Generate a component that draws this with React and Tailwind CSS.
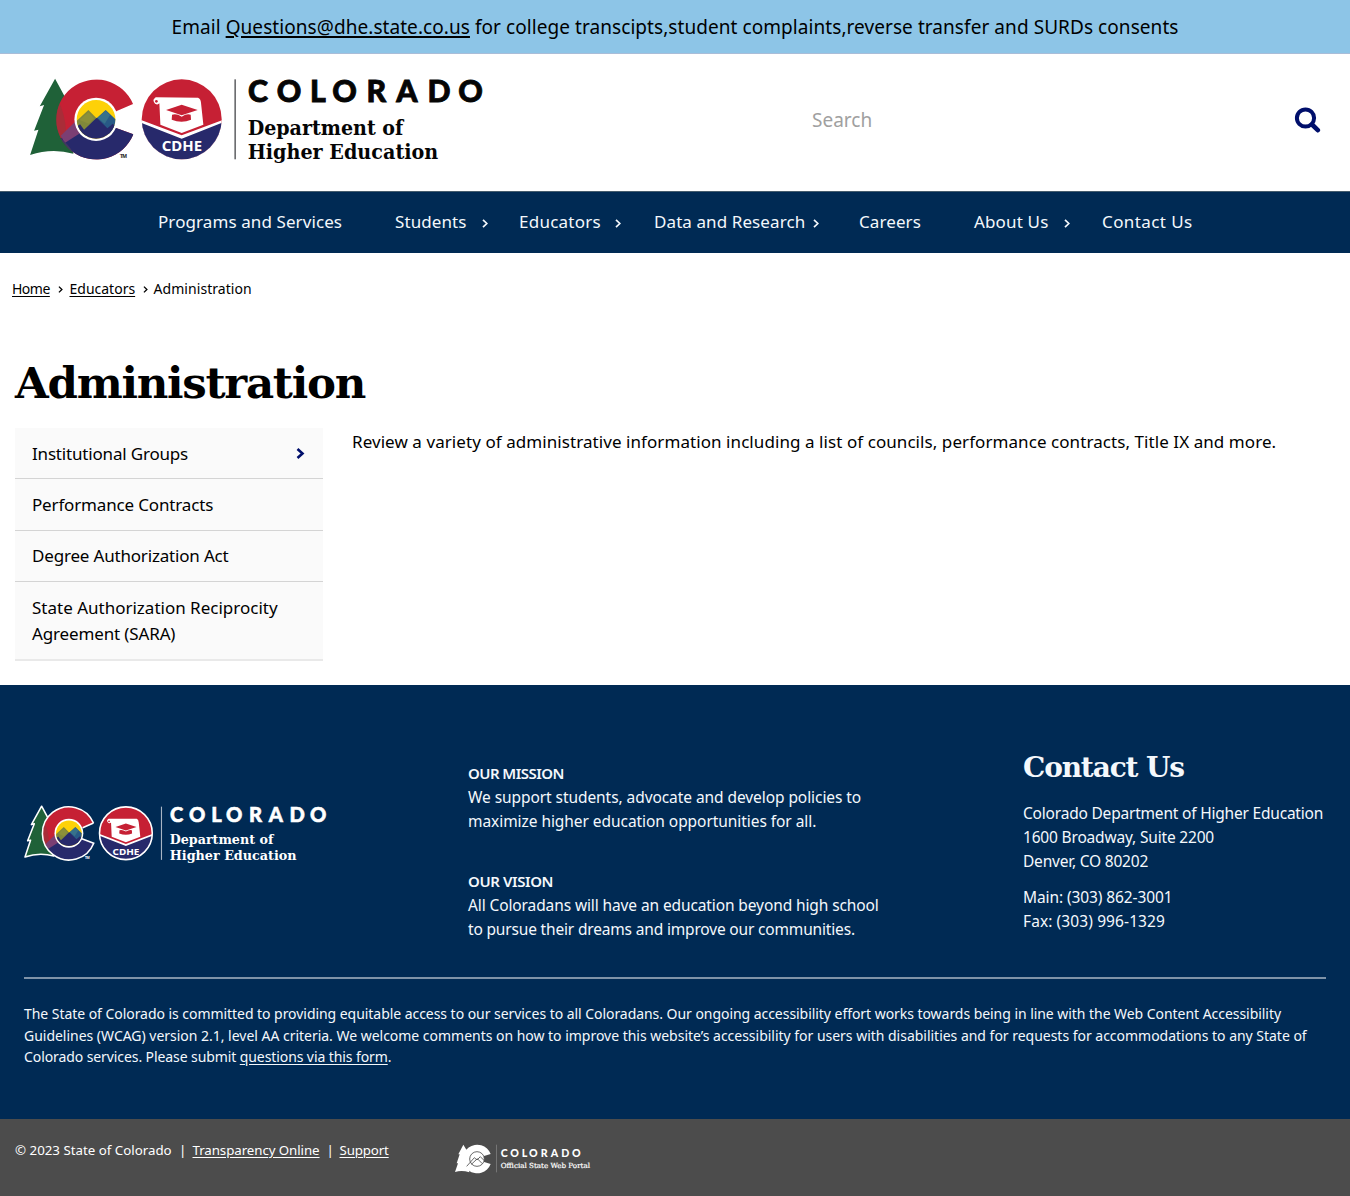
import { useId } from "react";

const slab = "font-['DejaVu_Serif',serif] font-bold";

const letters = [
  ["C", 684], ["O", 770], ["L", 870], ["O", 937],
  ["R", 1040], ["A", 1129], ["D", 1223], ["O", 1315],
];

function Emblem({ outlined }) {
  const id = useId();
  const line = outlined ? "#ffffff" : "none";
  return (
    <g>
      <path
        d="M105 43 L140 108 L160 268 Q95 250 30 272 L55 196 L42 199 L72 122 L59 126 Z"
        fill="#1f6138" stroke={line} strokeWidth="7" strokeLinejoin="round"
      />
      <clipPath id={id + "c"}>
        <path d="M339 119 A120 120 0 1 0 340 210 L286 190 L260 165 L290 140 Z" />
      </clipPath>
      <g clipPath={`url(#${id}c)`}>
        <rect x="100" y="40" width="250" height="250" fill="#c62034" />
        <path d="M100 246 L175 170 L290 190 L350 190 L350 300 L100 300 Z" fill="#27296b" />
        <path d="M100 130 L113 105 Q136 150 138 205 L112 234 Z" fill="#8c3a3c" opacity=".5" />
        <path d="M122 214 L176 162 L182 205 L134 236 Z" fill="#7b3f73" />
        <path d="M118 218 L134 232 Q156 254 160 270 L110 270 Z" fill="#413a61" />
      </g>
      {outlined && (
        <path d="M339 119 A120 120 0 1 0 340 210 L286 190 M290 140 L339 119" fill="none" stroke="#fff" strokeWidth="7" />
      )}
      <circle cx="228" cy="165" r="65" fill="#fff" />
      <clipPath id={id + "d"}><circle cx="228" cy="165" r="58" /></clipPath>
      <g clipPath={`url(#${id}d)`}>
        <rect x="168" y="105" width="120" height="120" fill="#fdd108" />
        <path d="M165 174 L205 137 L262 195 L165 225 Z" fill="#80883a" />
        <path d="M178 167 L205 144 L222 162 L206 178 Z" fill="#96973a" opacity=".5" />
        <path d="M215 175 L257 137 L300 178 L290 225 Z" fill="#285a86" />
        <path d="M232 160 L257 139 L270 152 L254 178 Z" fill="#37718b" />
        <path d="M165 190 L180 180 L192 196 L230 160 L262 192 L278 178 L295 194 L290 230 L165 230 Z" fill="#27296b" />
      </g>
      <text x="299" y="281" fontSize="17" fontWeight="700" fontFamily="Liberation Sans" fill={outlined ? "#fff" : "#222"} textLength="22">TM</text>

      <clipPath id={id + "e"}><circle cx="485" cy="165" r="120" /></clipPath>
      <g clipPath={`url(#${id}e)`}>
        <rect x="360" y="40" width="250" height="250" fill="#c62034" />
        <path d="M360 166 L485 213 L610 166 V290 H360 Z" fill="#fff" />
        <path d="M360 174 L485 223 L610 174 V290 H360 Z" fill="#27296b" />
      </g>
      <path d="M407 99 L534 100 Q542 103 543 116 L550 181 L485 206 L421 181 L418 117 Q413 123 405 118 Q396 108 404 102 Z" fill="#fff" />
      <circle cx="409" cy="111" r="4" fill="#c62034" />
      <path d="M438 137 L485 121 L533 137 L485 153 Z" fill="#c62034" />
      <path d="M456 151 Q470 147 485 157 Q500 147 512 151 L513 166 Q485 178 455 166 Z" fill="#c62034" />
      {outlined && <circle cx="485" cy="165" r="119" fill="none" stroke="#fff" strokeWidth="7" />}
      <text x="425" y="261" fontSize="40" fontWeight="700" fontFamily="Noto Sans" fill="#fff" textLength="121" lengthAdjust="spacingAndGlyphs">CDHE</text>
    </g>
  );
}

function DepartmentLogo({ outlined = false, className }) {
  const ink = outlined ? "#ffffff" : "#050505";
  return (
    <svg viewBox="30 38 1362 262" className={className} role="img" aria-label="Colorado Department of Higher Education">
      <Emblem outlined={outlined} />
      <rect x="643" y="45" width="5" height="240" fill={outlined ? "#a9b5c4" : "#6d6e71"} />
      <g fill={ink} stroke={ink} strokeWidth="2.5" fontSize="91" fontFamily="Lato" fontWeight="900">
        {letters.map(([l, x], i) => <text key={i} x={x} y="112">{l}</text>)}
      </g>
      <g fill={ink} fontSize="59" fontWeight="700" fontFamily="'DejaVu Serif',serif">
        <text x="683" y="213" textLength="467" lengthAdjust="spacingAndGlyphs">Department of</text>
        <text x="683" y="284" textLength="572" lengthAdjust="spacingAndGlyphs">Higher Education</text>
      </g>
    </svg>
  );
}

function PortalLogo() {
  const caps = [["C", 182], ["O", 211], ["L", 245], ["O", 267], ["R", 302], ["A", 332], ["D", 364], ["O", 396]];
  return (
    <svg viewBox="42 40 414 92" className="h-[30.7px] w-[138px] overflow-visible" role="img" aria-label="Colorado Official State Web Portal">
      <path d="M70 45 L83 66 L88 128 Q65 120 45 127 L54 101 L50 101 L59 74 L55 74 Z" fill="#fff" />
      <path d="M152 73 A43 43 0 1 0 152 103 L130 96 L122 86 L132 79 Z" fill="#fff" />
      <circle cx="111" cy="88" r="22" fill="#fff" stroke="#4c4c4c" strokeWidth="2.5" />
      <path d="M80 110 L103 84 L111 91 L121 81 L133 93 M94 104 L112 87 L127 102" fill="none" stroke="#4c4c4c" strokeWidth="2.5" />
      <rect x="168" y="45" width="2" height="83" fill="#8b8b8b" />
      <g fill="#fff" fontSize="32" fontFamily="Lato" fontWeight="900">
        {caps.map(([l, x], i) => <text key={i} x={x} y="81">{l}</text>)}
      </g>
      <text x="182" y="114" fill="#fff" stroke="#fff" strokeWidth=".6" fontSize="21" fontFamily="'DejaVu Serif',serif" textLength="268" lengthAdjust="spacingAndGlyphs">Official State Web Portal</text>
    </svg>
  );
}

function Chevron({ className }) {
  return (
    <svg viewBox="0 0 6 9" className={className} fill="none" stroke="currentColor" strokeWidth="1.7">
      <path d="M1 .8 L4.8 4.5 L1 8.2" />
    </svg>
  );
}

const nav = [
  { label: "Programs and Services", outer: "w-[237px]" },
  { label: "Students", outer: "w-[124px]", inner: "w-[93px]" },
  { label: "Educators", outer: "w-[135px] tracking-[0.25px]", inner: "w-[102px]" },
  { label: "Data and Research", outer: "w-[205px]", inner: "w-[165px]" },
  { label: "Careers", outer: "w-[115px]" },
  { label: "About Us", outer: "w-[128px] tracking-[0.15px]", inner: "w-[96px]" },
  { label: "Contact Us", outer: "w-[110px] tracking-[0.4px]" },
];

const sections = [
  ["Institutional Groups", "tracking-[-0.18px]"],
  ["Performance Contracts", "tracking-[-0.16px]"],
  ["Degree Authorization Act", "tracking-[-0.18px]"],
];

export default function App() {
  return (
    <div className="min-h-[1196px] w-full overflow-hidden bg-white font-['Noto_Sans',sans-serif] text-black">
      <div className="flex h-[54px] items-center justify-center border-b border-[#a9bdd8] bg-[#8dc5e7] pt-[2px] text-[19px] tracking-[0.066px] whitespace-pre">
        Email <a className="underline decoration-2 underline-offset-2">Questions@dhe.state.co.us</a> for college transcipts,student complaints,reverse transfer and SURDs consents
      </div>

      <header className="flex h-[137px] items-start pl-[30px]">
        <DepartmentLogo className="mt-[22.7px] h-[87.3px] w-[454px] overflow-visible" />
        <div className="ml-[327px] flex h-[132px] w-[510px] items-center justify-between">
          <span className="pl-px text-[19px] text-[#a0a0a0]">Search</span>
          <svg viewBox="0 0 27 26" className="h-[26px] w-[27px]" fill="none" stroke="#000f6b">
            <circle cx="11.5" cy="11" r="8.6" strokeWidth="4" />
            <path d="M18 17.5 L23.8 23.2" strokeWidth="4.6" strokeLinecap="round" />
          </svg>
        </div>
      </header>

      <nav className="flex h-[62px] items-center border-t border-[#455c6d] bg-[#002a54] pb-[2px] pl-[158px] text-[17px] tracking-[0.09px] text-[#f4f8fc]">
        {nav.map((n) => (
          <div key={n.label} className={n.outer}>
            <div className={`flex items-center justify-between whitespace-nowrap ${n.inner || ""}`}>
              {n.label}
              {n.inner && <Chevron className="mt-[3px] h-[9px] w-[6px]" />}
            </div>
          </div>
        ))}
      </nav>

      <div className="mt-[24px] flex h-[22px] items-center pl-3 text-[14px]">
        <a className="w-[38px] tracking-[-0.5px] whitespace-nowrap underline underline-offset-2">Home</a>
        <Chevron className="mt-[3px] mr-[7px] ml-[7.5px] h-[7px] w-[5px]" />
        <a className="w-[66px] underline underline-offset-2">Educators</a>
        <Chevron className="mt-[3px] mr-[6px] ml-[7px] h-[7px] w-[5px]" />
        <span className="tracking-[0.06px]">Administration</span>
      </div>

      <h1 className={`mt-[54px] ml-[15px] flex h-[60px] items-center text-[43.5px] tracking-[-1.27px] ${slab}`}>Administration</h1>

      <main className="mt-[15px] flex h-[257px] pl-[15px] text-[17px] leading-[26px]">
        <aside className="w-[308px] shrink-0">
          {sections.map(([label, track], i) => (
            <div key={label} className="flex h-[51.3px] items-center justify-between border-b border-[#d4d4d4] bg-[#fafafa] pt-px pr-[18px] pl-[17px]">
              <span className={track}>{label}</span>
              {i === 0 && (
                <svg viewBox="0 0 9 11" className="h-[11px] w-[9px]" fill="none" stroke="#000f6b" strokeWidth="2.6">
                  <path d="M1.5 1 L6.5 5.5 L1.5 10" />
                </svg>
              )}
            </div>
          ))}
          <div className="flex h-[79px] items-center border-b-2 border-[#e9e9e9] bg-[#fafafa] px-[17px] pt-[2px]">
            <span className="whitespace-nowrap">State Authorization Reciprocity<br /><span className="tracking-[-0.14px]">Agreement (SARA)</span></span>
          </div>
        </aside>
        <p className="mt-px ml-[29px] tracking-[0.07px] whitespace-nowrap">
          Review a variety of administrative information including a list of councils, performance contracts, Title IX and more.
        </p>
      </main>

      <footer className="h-[434px] bg-[#002a54] px-6 pt-[64px] text-[15.5px] leading-6 text-[#f4f8fc]">
        <div className="flex h-[228px] items-start">
          <DepartmentLogo outlined className="mt-[55.5px] ml-px h-[58.3px] w-[302px] shrink-0 overflow-visible" />
          <div className="mt-[12px] ml-[141px] w-[555px] shrink-0 whitespace-nowrap">
            <p className="text-[15px] font-semibold tracking-[-0.55px]">OUR MISSION</p>
            <p className="tracking-[-0.07px]">We support students, advocate and develop policies to</p>
            <p className="tracking-[-0.06px]">maximize higher education opportunities for all.</p>
            <p className="mt-9 text-[15px] font-semibold tracking-[-0.4px]">OUR VISION</p>
            <p className="tracking-[-0.11px]">All Coloradans will have an education beyond high school</p>
            <p className="tracking-[-0.17px]">to pursue their dreams and improve our communities.</p>
          </div>
          <div className="whitespace-nowrap">
            <h2 className={`flex h-[36px] items-center pt-px text-[28px] tracking-[-1.15px] ${slab}`}>Contact Us</h2>
            <p className="mt-[16px] tracking-[-0.2px]">Colorado Department of Higher Education</p>
            <p className="tracking-[-0.18px]">1600 Broadway, Suite 2200</p>
            <p className="tracking-[-0.2px]">Denver, CO 80202</p>
            <p className="mt-3 tracking-[-0.1px]">Main: (303) 862-3001</p>
            <p className="tracking-[0.1px]">Fax: (303) 996-1329</p>
          </div>
        </div>
        <div className="border-t-2 border-[#7f93a8] pt-[24px] text-[14px] leading-[21.5px] whitespace-nowrap">
          <p className="tracking-[-0.048px]">The State of Colorado is committed to providing equitable access to our services to all Coloradans. Our ongoing accessibility effort works towards being in line with the Web Content Accessibility</p>
          <p className="tracking-[-0.02px]">Guidelines (WCAG) version 2.1, level AA criteria. We welcome comments on how to improve this website’s accessibility for users with disabilities and for requests for accommodations to any State of</p>
          <p className="tracking-[-0.09px]">Colorado services. Please submit <a className="underline underline-offset-2">questions via this form</a>.</p>
        </div>
      </footer>

      <div className="flex h-[77px] items-start bg-[#4c4c4c] pl-[15px] text-[13.3px] text-white">
        <div className="mt-[22px] flex h-[20px] items-center whitespace-nowrap">
          <span className="w-[164px]">© 2023 State of Colorado</span>
          <span className="w-[13.5px]">|</span>
          <a className="w-[127px] tracking-[-0.07px] underline underline-offset-2">Transparency Online</a>
          <span className="ml-[7px] w-[13px]">|</span>
          <a className="w-[49px] tracking-[-0.15px] underline underline-offset-2">Support</a>
        </div>
        <div className="mt-[24px] ml-[65px]"><PortalLogo /></div>
      </div>
    </div>
  );
}
